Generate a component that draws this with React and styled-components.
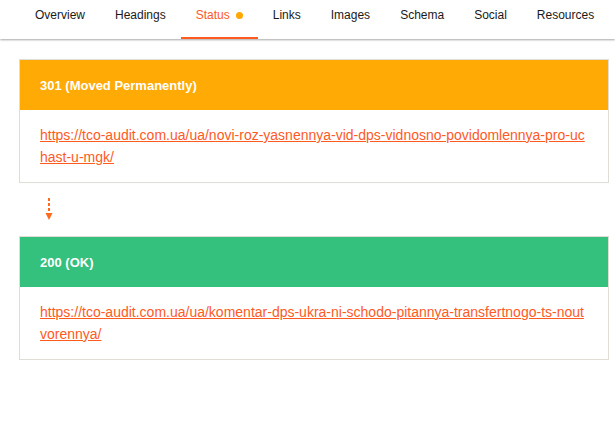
import React from "react";
import styled, { createGlobalStyle } from "styled-components";

const GlobalStyle = createGlobalStyle`
  html, body { margin: 0; padding: 0; background: #fff; }
  body { font-family: "Liberation Sans", Arial, sans-serif; }
  * { box-sizing: border-box; }
`;

const Nav = styled.nav`
  display: flex;
  height: 39px;
  padding-left: 20px;
  background: #fff;
  box-shadow: 0 1px 2px rgba(0, 0, 0, 0.35);
  position: relative;
`;

const Tab = styled.div`
  display: flex;
  align-items: flex-start;
  padding: 8px 15px 0;
  font-size: 12px;
  line-height: 14px;
  color: ${(p) => (p.$active ? "#ff5a1f" : "#1a1a1a")};
  border-bottom: 2px solid ${(p) => (p.$active ? "#ff5a1f" : "transparent")};
`;

const Dot = styled.span`
  width: 7px;
  height: 7px;
  border-radius: 50%;
  background: #ffa800;
  margin: 4px 0 0 6px;
`;

const Main = styled.main`
  padding: 20px 6px 0 19px;
`;

const Card = styled.section`
  border: 1px solid #e0ddd6;
`;

const CardHeader = styled.div`
  height: 50px;
  display: flex;
  align-items: center;
  padding: 0 20px;
  background: ${(p) => p.$color};
  color: #fff;
  font-weight: 700;
  font-size: 13px;
`;

const CardBody = styled.div`
  padding: 14px 20px;
  font-size: 14px;
  line-height: 22px;
  word-break: break-all;
`;

const Link = styled.a`
  color: #ff5a1f;
  text-decoration: underline;
`;

const ArrowRow = styled.div`
  display: flex;
  padding: 14px 0 15px 25px;
`;

const tabs = ["Overview", "Headings", "Status", "Links", "Images", "Schema", "Social", "Resources"];

const chain = [
  {
    code: "301 (Moved Permanently)",
    color: "#ffaa05",
    url: "https://tco-audit.com.ua/ua/novi-roz-yasnennya-vid-dps-vidnosno-povidomlennya-pro-uchast-u-mgk/",
  },
  {
    code: "200 (OK)",
    color: "#34c07d",
    url: "https://tco-audit.com.ua/ua/komentar-dps-ukra-ni-schodo-pitannya-transfertnogo-ts-noutvorennya/",
  },
];

const Arrow = () => (
  <svg width="10" height="24" viewBox="0 0 10 24">
    <line x1="5" y1="1" x2="5" y2="17" stroke="#ff6a1f" strokeWidth="2" strokeDasharray="3 2" />
    <polygon points="1.5,16 8.5,16 5,23" fill="#ff6a1f" />
  </svg>
);

export default function App() {
  return (
    <>
      <GlobalStyle />
      <Nav>
        {tabs.map((t) => (
          <Tab key={t} $active={t === "Status"}>
            {t}
            {t === "Status" && <Dot />}
          </Tab>
        ))}
      </Nav>
      <Main>
        {chain.map((c, i) => (
          <React.Fragment key={c.code}>
            {i > 0 && (
              <ArrowRow>
                <Arrow />
              </ArrowRow>
            )}
            <Card>
              <CardHeader $color={c.color}>{c.code}</CardHeader>
              <CardBody>
                <Link href="#">{c.url}</Link>
              </CardBody>
            </Card>
          </React.Fragment>
        ))}
      </Main>
    </>
  );
}
